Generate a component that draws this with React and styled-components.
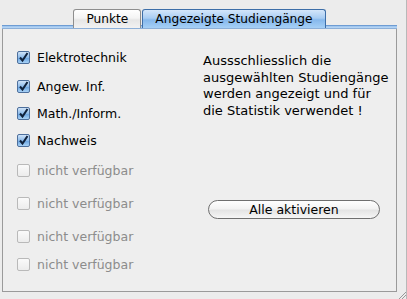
import React from 'react'
import styled, { createGlobalStyle } from 'styled-components'

const GlobalStyle = createGlobalStyle`
  html, body {
    margin: 0;
    padding: 0;
    background: #f2f2f2;
  }
  body {
    font-family: "DejaVu Sans", "Liberation Sans", sans-serif;
  }
`

const Window = styled.div`
  width: 407px;
  height: 299px;
  box-sizing: border-box;
  background: #ececec;
  padding: 9px 9px 7px 2px;
  display: flex;
  flex-direction: column;
  position: relative;
  border-right: 1px solid #b8b8b8;
`

const TabStrip = styled.div`
  display: flex;
  justify-content: center;
  height: 19px;
  position: relative;
  z-index: 1;
  margin-bottom: -3px;
`

const Tab = styled.div`
  height: 19px;
  box-sizing: border-box;
  padding: 0 12px;
  display: flex;
  align-items: center;
  font-size: 12.2px;
  color: #000;
  border: 1px solid ${p => (p.$active ? '#3d6ea8' : '#8e8e8e')};
  border-bottom: none;
  border-radius: 3px 3px 0 0;
  background: ${p =>
    p.$active
      ? 'linear-gradient(#d4e6fa 0%, #a9cdf3 45%, #86b8ec 55%, #a6d0f6 100%)'
      : 'linear-gradient(#ffffff 0%, #f4f4f4 45%, #e6e6e6 55%, #f2f2f2 100%)'};
  margin-left: ${p => (p.$active ? '1px' : '0')};
`

const Panel = styled.div`
  flex: 1;
  box-sizing: border-box;
  border: 1px solid #9a9a9a;
  border-top: none;
  background: #eeeeee;
  display: flex;
  flex-direction: column;
`

const BlueRule = styled.div`
  height: 4px;
  background: linear-gradient(#4d7fc0 0%, #9cc4ee 30%, #b9d6f4 70%, #6d94c4 100%);
  margin: 0 -1px;
`

const Body = styled.div`
  flex: 1;
  display: grid;
  grid-template-columns: 186px 1fr;
  padding: 21px 0 0 14px;
`

const List = styled.div`
  display: flex;
  flex-direction: column;
`

const Row = styled.label`
  display: flex;
  align-items: center;
  gap: 7px;
  height: 14px;
  margin-top: ${p => p.$space}px;
  font-size: 12.5px;
  color: ${p => (p.$disabled ? '#8c8c8c' : '#000')};
`

const Box = styled.span`
  width: 13px;
  height: 13px;
  box-sizing: border-box;
  border-radius: 2px;
  border: 1px solid ${p => (p.$checked ? '#4d6f9c' : '#b9b9b9')};
  background: ${p =>
    p.$checked
      ? 'linear-gradient(#cfe3f8 0%, #8dbbea 50%, #6aa4e0 55%, #a8d2f6 100%)'
      : 'linear-gradient(#fafafa, #ececec)'};
  display: flex;
  align-items: center;
  justify-content: center;
  flex-shrink: 0;
`

const Side = styled.div`
  display: flex;
  flex-direction: column;
`

const Note = styled.p`
  margin: 3px 0 0;
  font-size: 13px;
  line-height: 16.7px;
  color: #000;
`

const Capsule = styled.button`
  margin: 80px 0 0 5px;
  width: 172px;
  height: 19px;
  border-radius: 10px;
  border: 1px solid #6f6f6f;
  background: linear-gradient(#ffffff 0%, #f3f3f3 45%, #e4e4e4 55%, #f6f6f6 100%);
  font-family: inherit;
  font-size: 12.5px;
  color: #000;
  padding: 0;
`

const Grip = styled.svg`
  position: absolute;
  right: 0;
  bottom: 0;
`

function Check({ checked }) {
  return (
    <Box $checked={checked}>
      {checked && (
        <svg width="11" height="11" viewBox="0 0 11 11">
          <path d="M2 5.5 L4.5 8.5 L9.5 1" fill="none" stroke="#10223c" strokeWidth="2" />
        </svg>
      )}
    </Box>
  )
}

const courses = [
  { name: 'Elektrotechnik', on: true, space: 0 },
  { name: 'Angew. Inf.', on: true, space: 15 },
  { name: 'Math./Inform.', on: true, space: 13 },
  { name: 'Nachweis', on: true, space: 13 },
  { name: 'nicht verfügbar', off: true, space: 16 },
  { name: 'nicht verfügbar', off: true, space: 19 },
  { name: 'nicht verfügbar', off: true, space: 19 },
  { name: 'nicht verfügbar', off: true, space: 14 },
]

export default function App() {
  return (
    <>
      <GlobalStyle />
      <Window>
        <TabStrip>
          <Tab>Punkte</Tab>
          <Tab $active>Angezeigte Studiengänge</Tab>
        </TabStrip>
        <Panel>
          <BlueRule />
          <Body>
            <List>
              {courses.map((c, i) => (
                <Row key={i} $space={c.space} $disabled={c.off}>
                  <Check checked={c.on} />
                  {c.name}
                </Row>
              ))}
            </List>
            <Side>
              <Note>
                Aussschliesslich die<br />
                ausgewählten Studiengänge<br />
                werden angezeigt und für<br />
                die Statistik verwendet !
              </Note>
              <Capsule>Alle aktivieren</Capsule>
            </Side>
          </Body>
        </Panel>
        <Grip width="8" height="8" viewBox="0 0 8 8">
          <path d="M8 1 L1 8 M8 4 L4 8" stroke="#999" strokeWidth="1" />
        </Grip>
      </Window>
    </>
  )
}
